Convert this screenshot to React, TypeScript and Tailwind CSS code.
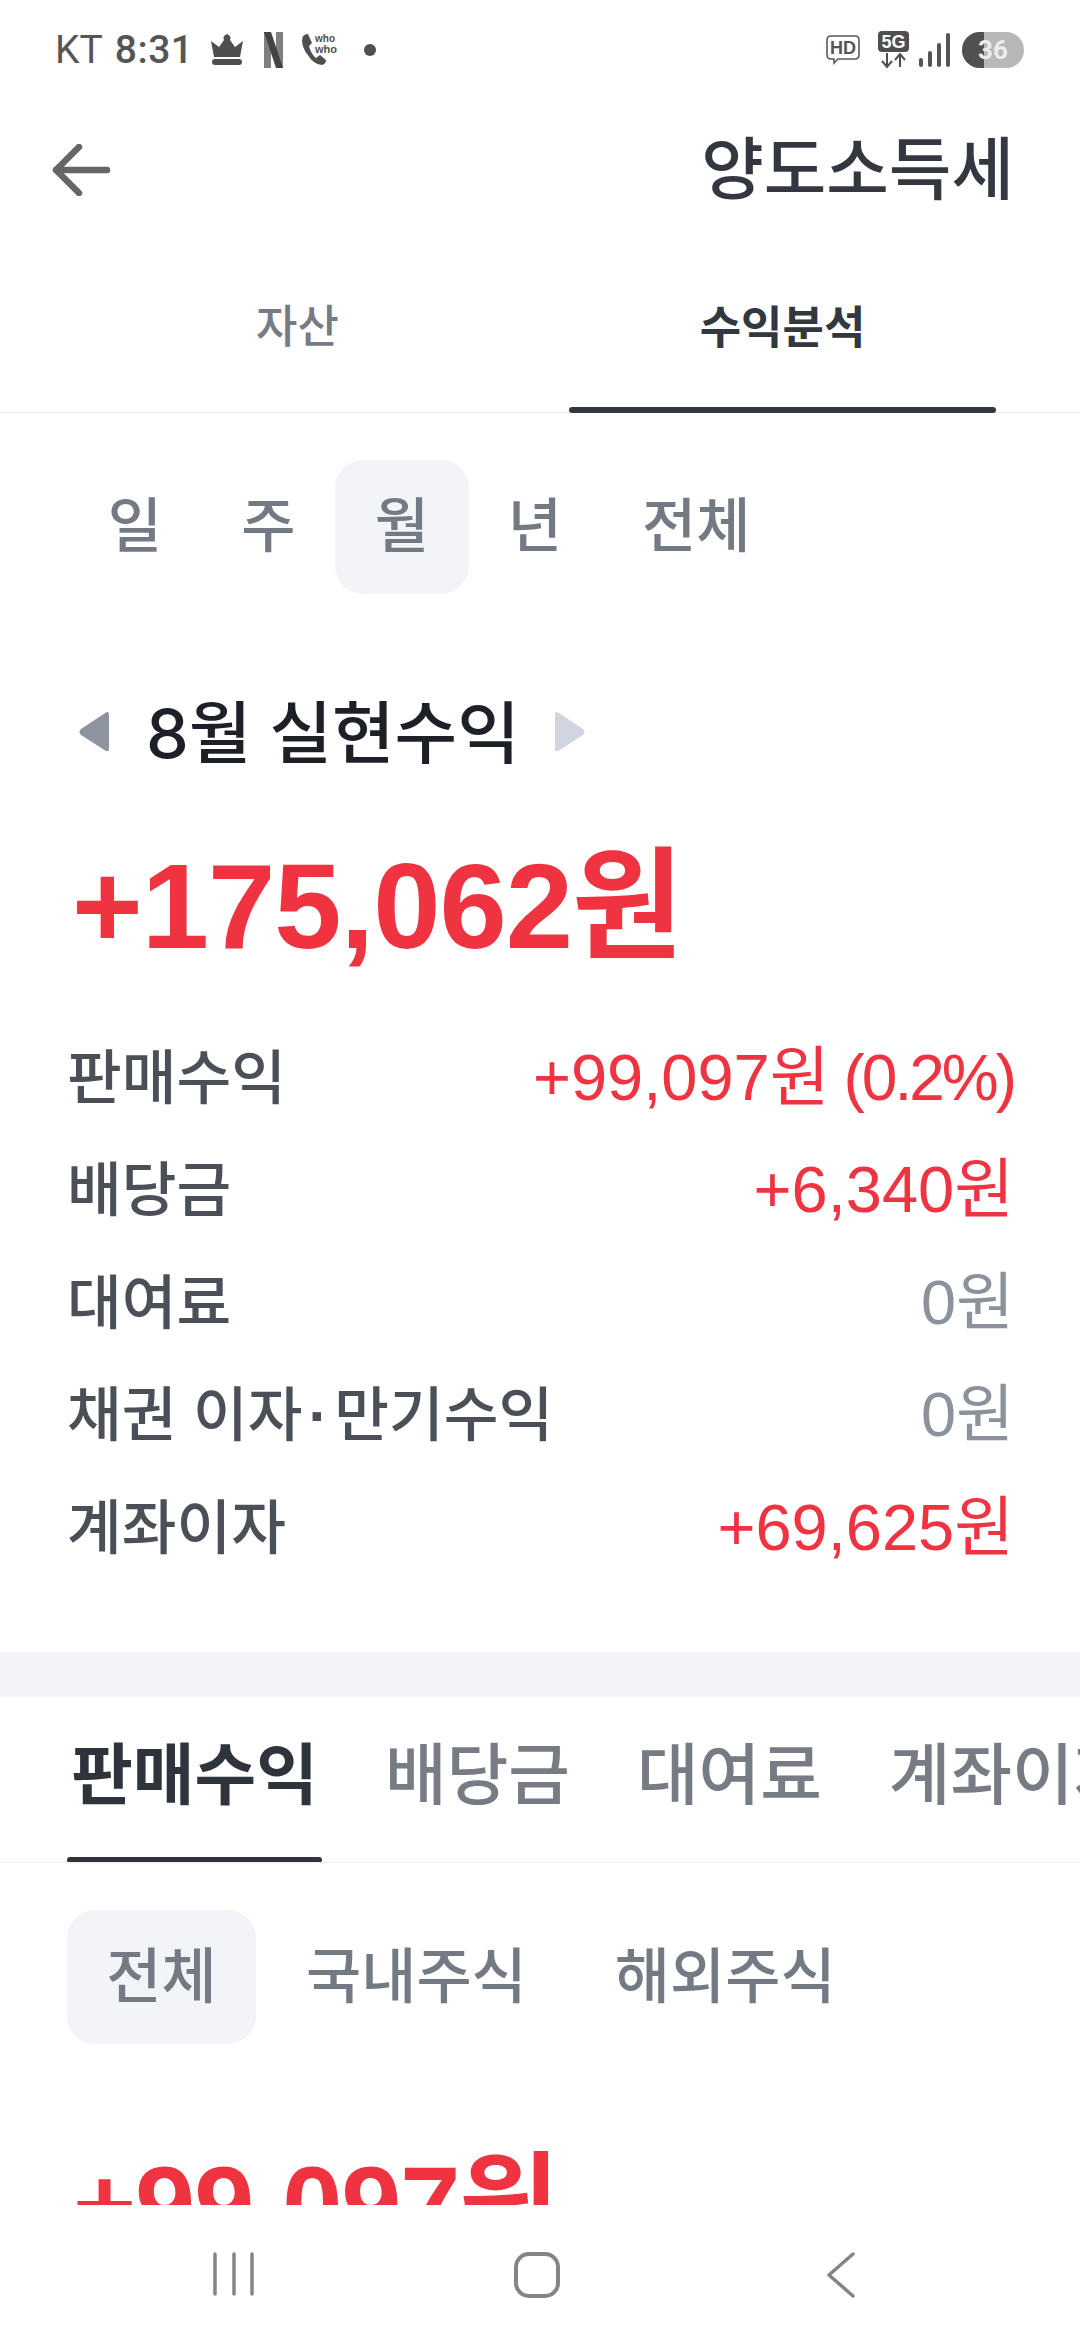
import React from "react";

const FONT = "font-['Liberation_Sans','Noto_Sans_CJK_KR',sans-serif]";

function StatusBar() {
  return (
    <div className="h-[100px] pl-[55px] pr-[56px] flex items-center justify-between text-[#555555]">
      <div className="flex items-center">
        <span className="text-[39px] leading-none font-['Roboto',sans-serif] mr-[12px] text-[#555]">KT</span>
        <span className="text-[39px] leading-none font-['Roboto',sans-serif] font-medium tracking-[0.5px]">8:31</span>
        <svg className="ml-[16px]" width="34" height="32" viewBox="0 0 34 32" fill="#4f4f4f">
          <path d="M1 7 L9 13 L14 6 Q12 2 17 0 Q22 2 20 6 L25 13 L33 7 L30 23 H4 Z" />
          <rect x="2" y="25" width="30" height="6" rx="3" />
        </svg>
        <svg className="ml-[20px]" width="20" height="36" viewBox="0 0 20 36">
          <rect x="0" y="0" width="7" height="36" fill="#808080" />
          <rect x="12" y="0" width="7" height="36" fill="#808080" />
          <path d="M0 0 H7 L19 36 H12 Z" fill="#444" />
        </svg>
        <svg className="ml-[17px]" width="40" height="36" viewBox="0 0 40 36" fill="none">
          <path d="M2 4 Q-1 12 6 22 Q13 33 21 33 Q25 32 25 28 L19 23 L15 26 Q10 22 8 14 L11 11 L7 2 Q4 2 2 4 Z" fill="#4f4f4f" />
          <text x="14" y="10" fontSize="10" fontWeight="700" fill="#4f4f4f" fontFamily="Liberation Sans">who</text>
          <text x="14" y="21" fontSize="11" fontWeight="700" fill="#4f4f4f" fontFamily="Liberation Sans">who</text>
        </svg>
        <div className="ml-[23px] w-[12px] h-[12px] rounded-full bg-[#4f4f4f]" />
      </div>
      <div className="flex items-center">
        <svg width="34" height="30" viewBox="0 0 34 30" fill="none">
          <path d="M5 1 H29 Q33 1 33 5 V20 Q33 24 29 24 H12 L8 28 V24 H5 Q1 24 1 20 V5 Q1 1 5 1 Z" stroke="#5a5a5a" strokeWidth="1.6" />
          <text x="17" y="19" textAnchor="middle" fontSize="18" fontWeight="700" fill="#555" fontFamily="Liberation Sans">HD</text>
        </svg>
        <svg className="ml-[18px]" width="32" height="38" viewBox="0 0 32 38" fill="none">
          <rect x="0" y="0" width="31" height="21" rx="4" fill="#4f4f4f" />
          <text x="15.5" y="17" textAnchor="middle" fontSize="18" fontWeight="700" fill="#fff" fontFamily="Liberation Sans">5G</text>
          <path d="M9 22 V35 M4 30 L9 36 L14 30" stroke="#4f4f4f" strokeWidth="2" />
          <path d="M22 36 V23 M17 29 L22 23 L27 29" stroke="#4f4f4f" strokeWidth="2" />
        </svg>
        <svg className="ml-[9px]" width="32" height="34" viewBox="0 0 32 34" fill="#555">
          <rect x="0" y="25" width="4" height="9" rx="2" />
          <rect x="9" y="18" width="4" height="16" rx="2" />
          <rect x="18" y="10" width="4" height="24" rx="2" />
          <rect x="27" y="0" width="4" height="34" rx="2" />
        </svg>
        <div className="relative ml-[11px] w-[62px] h-[36px] rounded-full bg-[#b8b8b8] overflow-hidden flex items-center justify-center">
          <div className="absolute left-0 top-0 bottom-0 w-[22px] bg-[#505050]" />
          <span className="relative text-[26px] font-bold leading-none text-[#ececec] font-['Roboto',sans-serif]">36</span>
        </div>
      </div>
    </div>
  );
}

function Header() {
  return (
    <div className="h-[140px] pl-[52px] pr-[66px] flex items-center justify-between">
      <svg width="60" height="52" viewBox="0 0 60 52" fill="none" stroke="#666" strokeWidth="6.500" strokeLinecap="round" strokeLinejoin="round">
        <path d="M4 26 H55 M27 3 L4 26 L27 49" />
      </svg>
      <h1 className="text-[68px] leading-none font-medium text-[#333740]">양도소득세</h1>
    </div>
  );
}

function TopTabs() {
  return (
    <div className="h-[173px] flex border-b border-[#eceef1]">
      <div className="w-[569px] flex items-center justify-center text-[45px] font-medium text-[#767b84] pt-[3px] pl-[26px]">
        자산
      </div>
      <div className="relative w-[427px] flex items-center justify-center text-[45px] font-bold text-[#333740] pt-[5px]">
        수익분석
        <div className="absolute left-0 right-0 bottom-[-1px] h-[6px] rounded-full bg-[#333740]" />
      </div>
    </div>
  );
}

function PeriodChips() {
  return (
    <div className="pl-[68px] pt-[47px] flex text-[59px] leading-none font-medium text-[#747a84]">
      <div className="w-[134px] h-[134px] flex items-center justify-center">일</div>
      <div className="w-[133px] h-[134px] flex items-center justify-center">주</div>
      <div className="w-[134px] h-[134px] rounded-[28px] bg-[#f2f4f7] flex items-center justify-center">월</div>
      <div className="w-[132px] h-[134px] flex items-center justify-center">년</div>
      <div className="ml-[33px] h-[134px] flex items-center justify-center px-[8px]">전체</div>
    </div>
  );
}

function Row({ label, value, tone }: { label: React.ReactNode; value: React.ReactNode; tone: "red" | "gray" }) {
  return (
    <div className="h-[112.5px] flex items-center justify-between">
      <span className="text-[59.500px] font-medium text-[#4b5058] leading-none pt-[2px]">{label}</span>
      <span className={`leading-none ${tone === "red" ? "text-[65px] text-[#ef3340]" : "text-[63px] text-[#8c929b]"}`}>{value}</span>
    </div>
  );
}

function Summary() {
  return (
    <div className="pl-[67px] pr-[66px]">
      <div className="mt-[93px] flex items-center h-[90px]">
        <svg width="32" height="42" viewBox="0 0 32 42" fill="#8d949e" className="ml-[11px]">
          <path d="M29 1 Q31 1 31 4 V38 Q31 41 28 40 L3 24 Q0 21 3 18 L28 1.500 Z" />
        </svg>
        <span className="ml-[36px] text-[68px] leading-none font-medium text-[#1d2026] font-['Inter','Noto_Sans_CJK_KR',sans-serif] pt-[2px]">
          8월 실현수익
        </span>
        <svg width="32" height="42" viewBox="0 0 32 42" fill="#d0d5df" className="ml-[34px]">
          <path d="M3 1 Q1 1 1 4 V38 Q1 41 4 40 L29 24 Q32 21 29 18 L4 1.500 Z" />
        </svg>
      </div>
      <div className="mt-[69px] h-[120px] flex items-center text-[121px] leading-none font-bold text-[#ef3340] tracking-[-1px] ml-[5px]">
        +175,062원
      </div>
      <div className="mt-[55px]">
        <Row
          label="판매수익"
          tone="red"
          value={
            <>
              +99,097원<span className="ml-[14px] text-[64px] tracking-[-3px]">(0.2%)</span>
            </>
          }
        />
        <Row label="배당금" value="+6,340원" tone="red" />
        <Row label="대여료" value="0원" tone="gray" />
        <Row
          label={
            <>
              채권 이자<span className="mx-[6px] font-bold">·</span>만기수익
            </>
          }
          value="0원"
          tone="gray"
        />
        <Row label="계좌이자" value="+69,625원" tone="red" />
      </div>
    </div>
  );
}

function BottomTabs() {
  return (
    <div className="h-[166px] flex border-b border-[#eceef1] pl-[67px] overflow-hidden whitespace-nowrap text-[67px] font-medium text-[#767b84]">
      <div className="relative w-[255px] shrink-0 flex items-center justify-center font-bold text-[#2f333b] pb-[6px]">
        판매수익
        <div className="absolute left-0 right-0 bottom-[-1px] h-[6px] rounded-full bg-[#2f333b]" />
      </div>
      <div className="ml-[63px] shrink-0 flex items-center pb-[6px]">배당금</div>
      <div className="ml-[67px] shrink-0 flex items-center pb-[6px]">대여료</div>
      <div className="ml-[67px] shrink-0 flex items-center pb-[6px]">계좌이자</div>
    </div>
  );
}

function SubChips() {
  return (
    <div className="pl-[67px] pt-[47px] flex items-center text-[60px] leading-none font-medium text-[#747a84]">
      <div className="w-[189px] h-[134px] rounded-[28px] bg-[#f2f4f7] flex items-center justify-center pt-[2px]">전체</div>
      <div className="ml-[50px] pt-[3px]">국내주식</div>
      <div className="ml-[88px] pt-[3px]">해외주식</div>
    </div>
  );
}

function NavBar() {
  return (
    <div className="h-[135px] shrink-0 bg-white flex items-start pt-[47px] pl-[213px]">
      <svg width="42" height="44" viewBox="0 0 42 44" fill="none" stroke="#858585" strokeWidth="3.500" strokeLinecap="round">
        <path d="M2 2 V42 M21 2 V42 M39 2 V42" />
      </svg>
      <svg className="ml-[259px]" width="46" height="46" viewBox="0 0 46 46" fill="none" stroke="#858585" strokeWidth="4">
        <rect x="2" y="2" width="42" height="42" rx="13" />
      </svg>
      <svg className="ml-[266px]" width="30" height="46" viewBox="0 0 30 46" fill="none" stroke="#858585" strokeWidth="3.500" strokeLinecap="round" strokeLinejoin="round">
        <path d="M27 2 L3 23 L27 44" />
      </svg>
    </div>
  );
}

export default function App() {
  return (
    <div className={`w-[1080px] h-[2340px] bg-white flex flex-col overflow-hidden ${FONT}`}>
      <div className="flex-1 overflow-hidden">
        <StatusBar />
        <Header />
        <TopTabs />
        <PeriodChips />
        <Summary />
        <div className="mt-[68px] h-[45px] bg-[#f2f4f7]" />
        <BottomTabs />
        <SubChips />
        <div className="pl-[73px] mt-[107px] text-[108px] leading-none font-bold text-[#ef3340] tracking-[-1px]">+99,097원</div>
      </div>
      <NavBar />
    </div>
  );
}
